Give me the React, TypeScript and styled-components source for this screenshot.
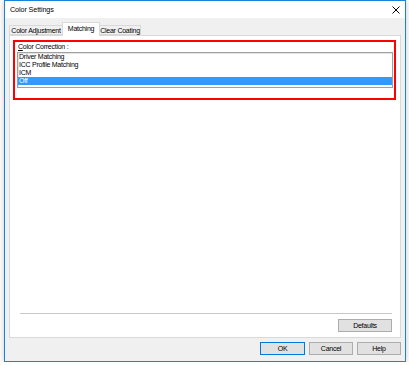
import styled, { createGlobalStyle } from "styled-components";

const GlobalStyle = createGlobalStyle`
  body {
    margin: 0;
    background: #ffffff;
    font-family: "Liberation Sans", Arial, sans-serif;
  }
`;

const Window = styled.div`
  margin-left: 4px;
  width: 400px;
  height: 360px;
  border: 1px solid #1883d7;
  display: flex;
  flex-direction: column;
  box-shadow: 0 0 6px rgba(0, 0, 0, 0.22);
  background: #f0f0f0;
`;

const TitleBar = styled.div`
  height: 17px;
  background: #ffffff;
  display: flex;
  align-items: center;
  justify-content: space-between;
  padding: 0 5px 0 5px;
  font-size: 7.2px;
  letter-spacing: -0.1px;
  color: #000;
`;

const Body = styled.div`
  flex: 1;
  display: flex;
  flex-direction: column;
  padding: 4px 4px 5px 4px;
`;

const Tabs = styled.div`
  display: flex;
  height: 13px;
  align-items: flex-end;
  position: relative;
  z-index: 1;
`;

const Tab = styled.div<{ active?: boolean; w: number }>`
  box-sizing: border-box;
  width: ${(p) => p.w}px;
  height: ${(p) => (p.active ? "14px" : "10px")};
  margin-bottom: ${(p) => (p.active ? "-1px" : "0")};
  display: flex;
  align-items: center;
  justify-content: center;
  white-space: nowrap;
  font-size: 7px;
  letter-spacing: -0.25px;
  color: #000;
  background: ${(p) => (p.active ? "#ffffff" : "#f0f0f0")};
  border: 1px solid #d9d9d9;
  border-bottom: ${(p) => (p.active ? "none" : "1px solid #d9d9d9")};
  margin-left: ${(p) => (p.active ? "-1px" : "0")};
  margin-right: ${(p) => (p.active ? "-1px" : "0")};
  padding-bottom: ${(p) => (p.active ? "3px" : "0")};
  position: relative;
  z-index: ${(p) => (p.active ? 2 : 1)};
`;

const Panel = styled.div`
  box-sizing: border-box;
  height: 303px;
  background: #ffffff;
  border: 1px solid #d9d9d9;
  display: flex;
  flex-direction: column;
  padding: 4px 4px 5px 3px;
`;

const Highlight = styled.div`
  box-sizing: border-box;
  height: 60px;
  border: 2px solid #ff0000;
  padding: 1px 1px 0 2px;
  display: flex;
  flex-direction: column;
`;

const Label = styled.div`
  font-size: 7px;
  letter-spacing: -0.25px;
  color: #000;
  height: 9px;
  line-height: 8px;
  padding-left: 1px;
  white-space: nowrap;
  u {
    text-decoration: underline;
  }
`;

const ListBox = styled.div`
  box-sizing: border-box;
  height: 36px;
  border: 1px solid #a0a0a0;
  box-shadow: inset 1px 1px 0 #e3e3e3;
  display: flex;
  flex-direction: column;
`;

const Item = styled.div<{ selected?: boolean }>`
  height: 8px;
  line-height: 8px;
  font-size: 7px;
  letter-spacing: -0.25px;
  padding-left: 1px;
  white-space: nowrap;
  color: ${(p) => (p.selected ? "#ffffff" : "#000000")};
  background: ${(p) => (p.selected ? "#3399ff" : "transparent")};
`;

const Spacer = styled.div`
  flex: 1;
`;

const Separator = styled.div`
  height: 1px;
  background: #c8c8c8;
  margin: 0 4px 0 7px;
`;

const PanelFooter = styled.div`
  display: flex;
  justify-content: flex-end;
  padding: 5px 4px 0 0;
`;

const Button = styled.button<{ primary?: boolean; w: number }>`
  box-sizing: border-box;
  width: ${(p) => p.w}px;
  height: 13px;
  padding: 0;
  font-family: "Liberation Sans", Arial, sans-serif;
  font-size: 7px;
  letter-spacing: -0.25px;
  color: #000;
  background: #e1e1e1;
  border: 1px solid ${(p) => (p.primary ? "#0078d7" : "#adadad")};
`;

const Footer = styled.div`
  display: flex;
  justify-content: flex-end;
  gap: 4px;
  margin-top: 4px;
`;

const Close = () => (
  <svg width="8" height="8" viewBox="0 0 8 8">
    <path d="M0.5 0.5 L7.5 7.5 M7.5 0.5 L0.5 7.5" stroke="#000" strokeWidth="1" />
  </svg>
);

const options = ["Driver Matching", "ICC Profile Matching", "ICM", "Off"];

export default function App() {
  return (
    <>
      <GlobalStyle />
      <Window>
        <TitleBar>
          <span>Color Settings</span>
          <Close />
        </TitleBar>
        <Body>
          <Tabs>
            <Tab w={54}>Color Adjustment</Tab>
            <Tab active w={38}>
              Matching
            </Tab>
            <Tab w={42}>Clear Coating</Tab>
          </Tabs>
          <Panel>
            <Highlight>
              <Label>
                <u>C</u>olor Correction :
              </Label>
              <ListBox>
                {options.map((o) => (
                  <Item key={o} selected={o === "Off"}>
                    {o}
                  </Item>
                ))}
              </ListBox>
            </Highlight>
            <Spacer />
            <Separator />
            <PanelFooter>
              <Button w={54}>Defaults</Button>
            </PanelFooter>
          </Panel>
          <Footer>
            <Button primary w={45}>
              OK
            </Button>
            <Button w={44}>Cancel</Button>
            <Button w={44}>Help</Button>
          </Footer>
        </Body>
      </Window>
    </>
  );
}
